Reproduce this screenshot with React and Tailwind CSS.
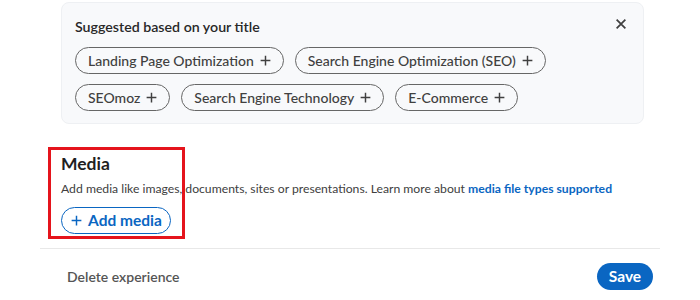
import React from 'react';

const font = { fontFamily: 'Lato, "Noto Sans", sans-serif' };

const tags = [
  ['Landing Page Optimization', 'Search Engine Optimization (SEO)'],
  ['SEOmoz', 'Search Engine Technology', 'E-Commerce'],
];

const Plus = ({ className }) => (
  <svg viewBox="0 0 16 16" className={className} fill="none" stroke="currentColor" strokeWidth="1.8">
    <path d="M8 2v12M2 8h12" />
  </svg>
);

const Pill = ({ label }) => (
  <button className="h-[27px] pl-[12px] pr-[11px] rounded-full border border-[#666] bg-transparent flex items-center gap-[5px] text-[14px] text-[#404040] font-medium">
    {label}
    <Plus className="w-[13px] h-[13px]" />
  </button>
);

export default function App() {
  return (
    <div className="relative w-[700px] h-[300px] overflow-hidden bg-white" style={font}>
      {/* Suggestions card */}
      <div className="ml-[61px] mt-[2px] w-[583px] h-[122px] rounded-lg bg-[#f8f9fb] border border-[#eef0f3] pl-[13px] pr-[14px] pt-[14px] relative">
        <p className="text-[14.2px] font-semibold text-[#282828] leading-[20px]">Suggested based on your title</p>
        <button className="absolute right-[15px] top-[14px] text-[#404040]">
          <svg viewBox="0 0 16 16" className="w-[14px] h-[14px]" fill="none" stroke="currentColor" strokeWidth="2">
            <path d="M3 3l10 10M13 3L3 13" />
          </svg>
        </button>
        <div className="mt-[10px] flex flex-col gap-[10px]">
          {tags.map((row, i) => (
            <div key={i} className="flex gap-[11px]">
              {row.map((t) => (
                <Pill key={t} label={t} />
              ))}
            </div>
          ))}
        </div>
      </div>

      {/* Media */}
      <div className="ml-[61px] mt-[28px]">
        <h2 className="text-[17.5px] font-bold text-[#1f1f1f] leading-[24px]">Media</h2>
        <p className="mt-[4px] text-[12.2px] text-[#404040] leading-[18px]">
          Add media like images, documents, sites or presentations. Learn more about{' '}
          <a className="text-[#0a66c2] font-bold">media file types supported</a>
        </p>
        <button className="mt-[9px] h-[27px] w-[110px] rounded-full border border-[#0a66c2] text-[#0a66c2] text-[15.5px] font-bold flex items-center justify-center gap-[5px]">
          <Plus className="w-[13px] h-[13px]" />
          Add media
        </button>
      </div>

      {/* annotation */}
      <div className="absolute left-[48px] top-[147px] w-[137px] h-[92px] border-[3px] border-[#e5141c]" />

      {/* Footer */}
      <div className="mx-[40px] mt-[14px] border-t border-[#e8e8e8] flex items-center justify-between pl-[27px] pr-[7px] pt-[14px]">
        <span className="text-[14px] font-semibold text-[#555]">Delete experience</span>
        <button className="h-[27px] w-[56px] rounded-full bg-[#0a66c2] text-white text-[15.5px] font-bold">Save</button>
      </div>
    </div>
  );
}
